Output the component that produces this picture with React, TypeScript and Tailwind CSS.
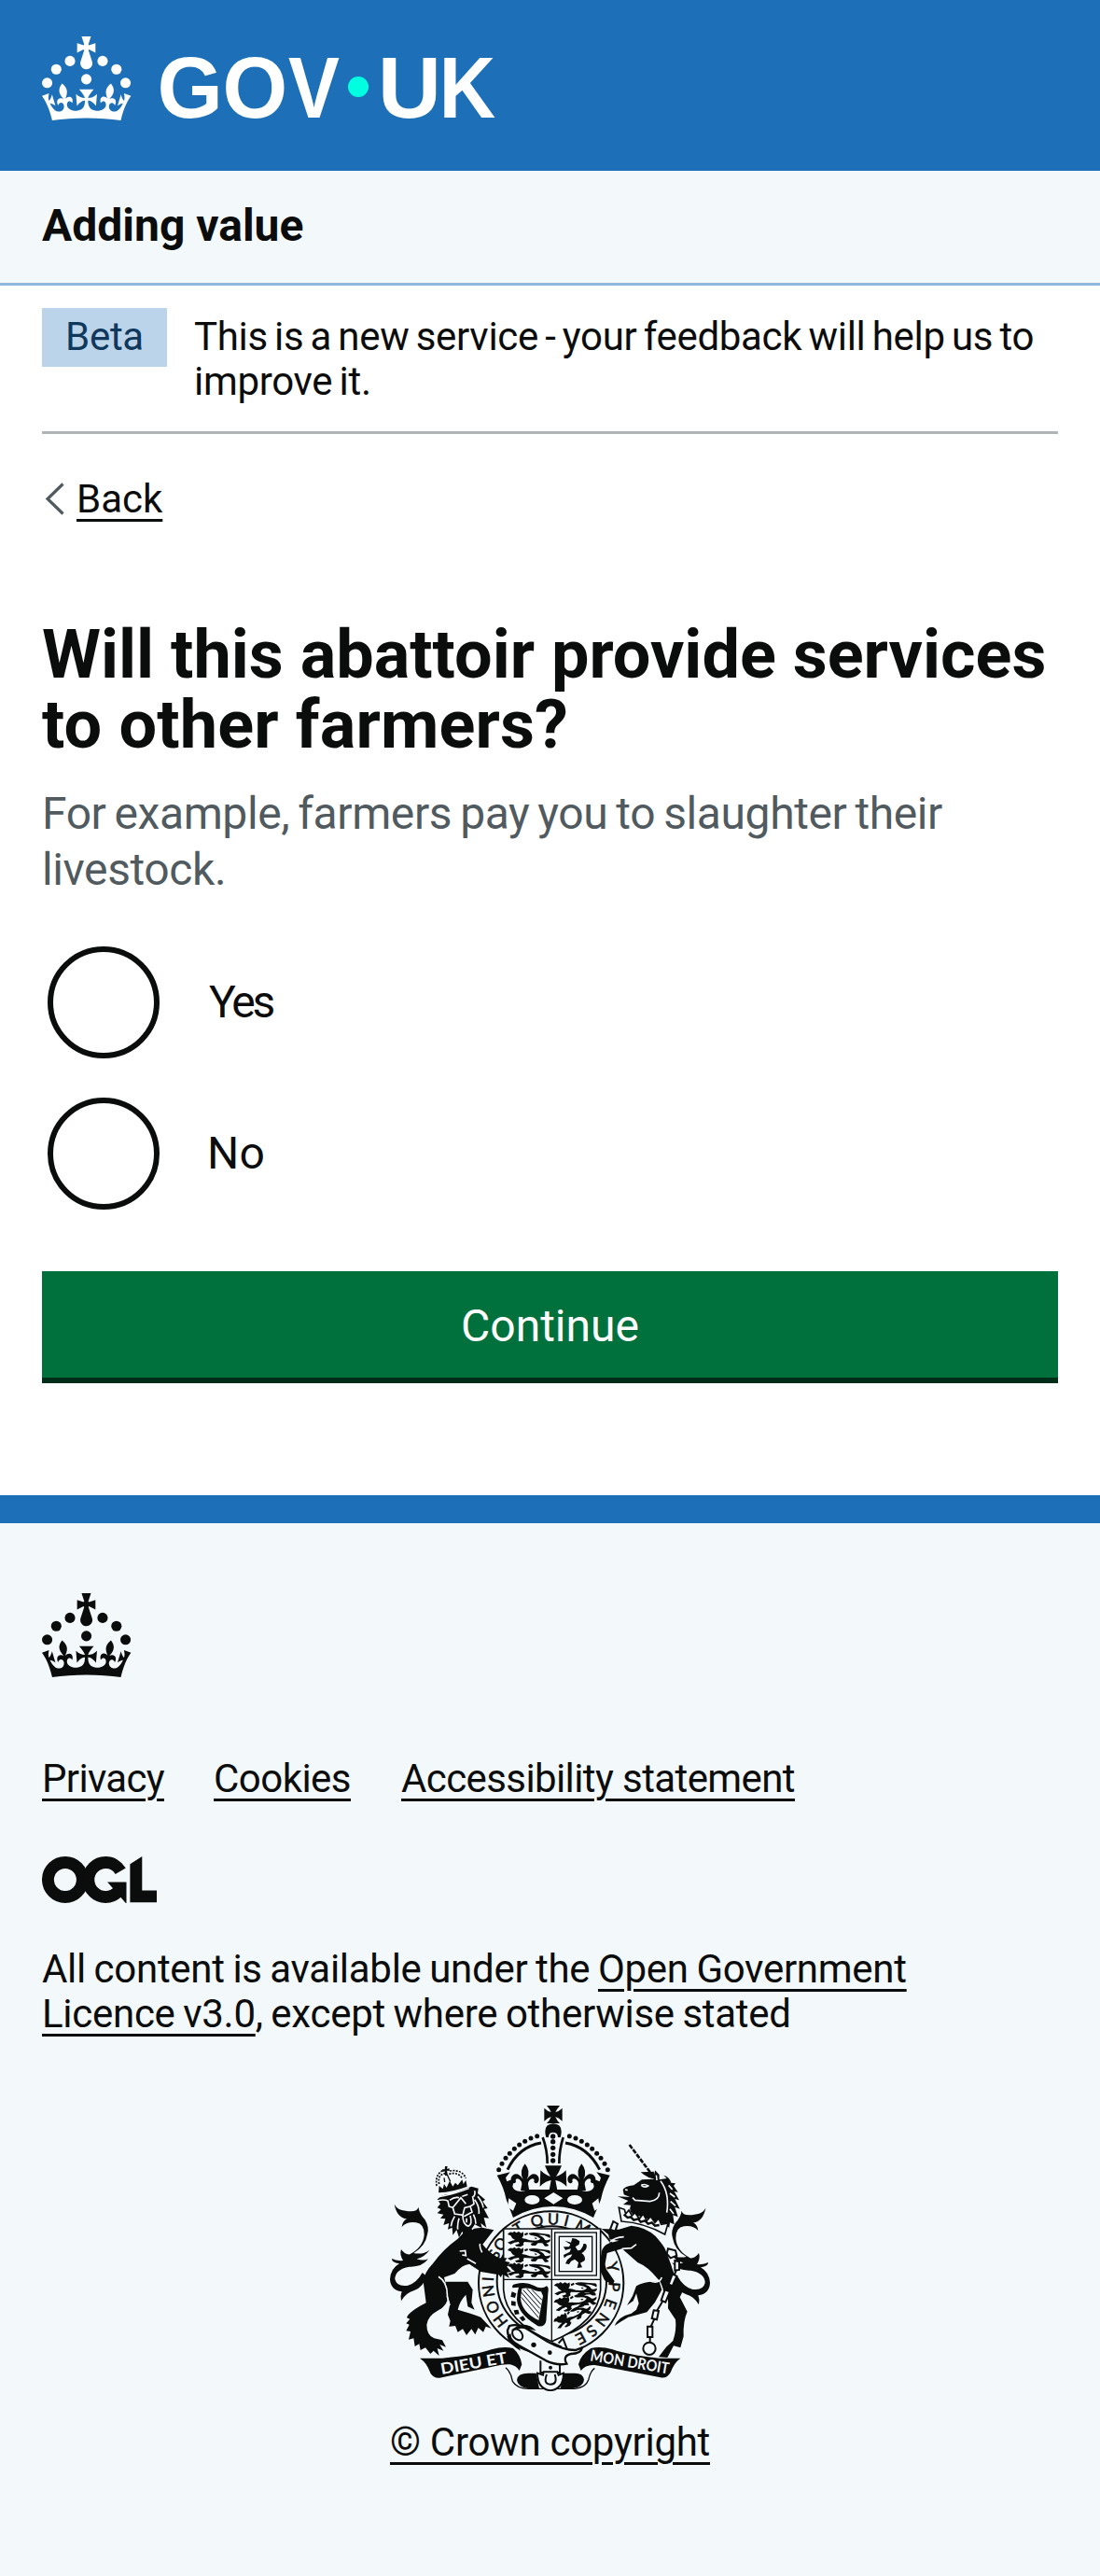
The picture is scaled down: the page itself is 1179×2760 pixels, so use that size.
import React from "react";

const INK = "#0b0c0c";
const PAPER = "#f3f8fa";

const CROWN =
  "M33.1,9.8c.2-.1.3-.3.5-.5l4.6,2.4v-6.8l-4.6,1.5c-.1-.2-.3-.3-.5-.5l1.9-5.9h-6.7l1.9,5.9c-.2.1-.3.3-.5.5l-4.6-1.5v6.8l4.6-2.4c.1.2.3.3.5.5l-2.6,8c-.9,2.8,1.2,5.7,4.1,5.7h0c3,0,5.1-2.9,4.1-5.7l-2.6-8ZM37,37.9s-3.4,3.8-4.1,6.1c2.2,0,4.2-.5,6.4-2.8l-.7,8.5c-2-2.8-4.4-4.1-5.7-3.8.1,3.1.5,6.7,5.8,7.2,3.7.3,6.7-1.5,7-3.8.4-2.6-2-4.3-3.7-1.6-1.4-4.5,2.4-6.1,4.9-3.2-1.9-4.5-1.8-7.7,2.4-10.9,3,4,2.6,7.3-1.2,11.1,2.4-1.3,6.2,0,4,4.6-1.2-2.8-3.7-2.2-4.2.2-.3,1.7.7,3.7,3,4.2,1.9.3,4.7-.9,7-5.9-1.3,0-2.4.7-3.9,1.7l2.4-8c.6,2.3,1.4,3.7,2.2,4.5.6-1.6.5-2.8,0-5.3l5,1.8c-2.6,3.6-5.2,8.7-7.3,17.5-7.4-1.1-15.7-1.7-24.5-1.7h0c-8.8,0-17.1.6-24.5,1.7-2.1-8.9-4.7-13.9-7.3-17.5l5-1.8c-.5,2.5-.6,3.7,0,5.3.8-.8,1.6-2.3,2.2-4.5l2.4,8c-1.5-1-2.6-1.7-3.9-1.7,2.3,5,5.2,6.2,7,5.9,2.3-.4,3.3-2.4,3-4.2-.5-2.4-3-3.1-4.2-.2-2.2-4.6,1.6-6,4-4.6-3.7-3.7-4.2-7.1-1.2-11.1,4.2,3.2,4.3,6.4,2.4,10.9,2.5-2.8,6.3-1.3,4.9,3.2-1.8-2.7-4.1-1-3.7,1.6.3,2.3,3.3,4.1,7,3.8,5.4-.5,5.7-4.2,5.8-7.2-1.3-.2-3.7,1-5.7,3.8l-.7-8.5c2.2,2.3,4.2,2.7,6.4,2.8-.7-2.3-4.1-6.1-4.1-6.1h10.6,0Z";

const CROWN_PEARLS: [number, number][] = [
  [20, 17.6],
  [10.2, 23.5],
  [3.7, 33.2],
  [31.7, 30.6],
  [43.3, 17.6],
  [53.2, 23.5],
  [59.7, 33.2],
];

function Crown() {
  return (
    <g fill="currentColor">
      {CROWN_PEARLS.map(([x, y]) => (
        <circle key={`${x}-${y}`} cx={x} cy={y} r="3.7" />
      ))}
      <path d={CROWN} />
    </g>
  );
}

const WORDMARK: [string, number, number][] = [
  ["G", 123.4, 70.3],
  ["O", 193.4, 69.7],
  ["V", 263.9, 54.9],
  ["U", 360, 67.9],
  ["K", 425.8, 60.4],
];

function Logotype() {
  return (
    <svg viewBox="0 0 486 90" className="block h-[90px] w-[486px] overflow-visible text-white" aria-label="GOV.UK">
      <g transform="scale(1.5)">
        <Crown />
      </g>
      <g fill="currentColor" fontFamily="Liberation Sans, Arial, sans-serif" fontWeight="700" fontSize="92.2">
        {WORDMARK.map(([c, x, w]) => (
          <text key={c} x={x} y="87" textLength={w} lengthAdjust="spacingAndGlyphs">
            {c}
          </text>
        ))}
      </g>
      <circle cx="339" cy="54" r="11" fill="#00ffe0" />
    </svg>
  );
}

function OglMark() {
  return (
    <svg viewBox="0 0 483.2 195.7" className="block h-[50px] w-[123px]" aria-label="Open Government Licence">
      <circle cx="97.8" cy="97.8" r="72.5" fill="none" stroke={INK} strokeWidth="50.7" />
      <circle cx="268.1" cy="97.8" r="72.5" fill="none" stroke={INK} strokeWidth="50.7" strokeDasharray="361 94.5" strokeDashoffset="-53.5" />
      <path d="M275.5 107.8h80v87.8h-3l-19.4-22.2-33.3-38.1z" fill={INK} />
      <path d="M370.8 32.4 421.5 0v142.8h61.7v50.7H370.8z" fill={INK} />
    </svg>
  );
}

const MOTTO: [string, number][] = [
  ["H", 143], ["O", 157], ["N", 172], ["I", 183],
  ["S", 206], ["O", 217],
  ["T", 239], ["Q", 257], ["U", 272], ["I", 284], ["M", 300],
  ["Y", 346], ["P", 4], ["E", 20], ["N", 36], ["S", 50], ["E", 62],
];

const BEADS: [number, number][] = [
  [527, 146], [507, 153], [488, 163], [470, 174], [454, 187], [439, 202], [426, 217], [414, 235], [404, 254],
];

function PassantLion({ x, y, r = 0 }: { x: number; y: number; r?: number }) {
  return (
    <g transform={`translate(${x} ${y}) rotate(${r})`}>
      <path d="M-8 -16 Q0 -26 8 -22 L14 -26 L20 -21 L28 -25 L36 -20 L42 -24 Q46 -12 38 -4 L50 -2 Q62 4 80 4 Q92 4 98 -2 Q90 -10 74 -12 Q62 -14 60 -20 Q74 -24 96 -20 L126 -16 Q132 -12 128 -4 L122 -8 Q108 -16 92 -14 Q106 -10 110 -2 Q112 4 122 2 L130 0 Q130 10 116 12 L124 18 Q124 24 112 22 L104 12 L90 12 L82 20 L70 20 L66 14 L76 10 L46 8 Q40 12 44 18 L34 24 L20 22 L16 18 L30 14 L28 8 L14 10 L2 16 L-8 10 L6 4 L16 2 Q4 -4 2 -12z" />
      <path d="M46 -18 l10 -4 l2 6 l-10 4z M78 -6 l10 2 l-6 4z" />
    </g>
  );
}

function TailFlames() {
  return (
    <path d="M68 365 Q78 384 104 386 Q142 392 145 374 Q150 398 166 414 Q182 440 174 462 Q168 500 130 522 Q160 528 181 512 Q166 534 140 541 Q160 548 177 541 Q156 568 116 566 Q70 574 70 606 Q76 632 112 626 Q140 618 158 585 L172 596 Q162 630 132 642 Q104 650 90 676 Q86 660 92 646 Q56 642 54 606 Q56 572 84 556 Q58 552 60 540 Q74 548 96 546 Q84 526 90 510 Q102 528 118 526 Q162 502 164 462 Q164 428 138 424 Q108 420 92 438 Q94 420 108 412 Q76 408 68 365z" />
  );
}

function FleurDeLis({ x, y }: { x: number; y: number }) {
  return (
    <path
      transform={`translate(${x} ${y})`}
      d="M0 0 Q20 24 6 50 Q22 26 38 36 Q50 46 42 60 Q34 66 29 58 Q32 48 24 48 Q10 52 10 66 L14 86 L-14 86 L-10 66 Q-10 52 -24 48 Q-32 48 -29 58 Q-34 66 -42 60 Q-50 46 -38 36 Q-22 26 -6 50 Q-20 24 0 0z"
    />
  );
}

function RoyalArms() {
  return (
    <svg viewBox="54 48 1029 918" className="block h-[306px] w-[343px]" fill={INK} aria-hidden="true">
      {/* Tails of both supporters */}
      <TailFlames />
      <g transform="translate(1137 12) scale(-1 1)">
        <TailFlames />
      </g>

      {/* Garter */}
      <ellipse cx="572" cy="618" rx="233" ry="230" fill={PAPER} stroke={INK} strokeWidth="6" />
      <ellipse cx="574" cy="612" rx="176" ry="176" fill={PAPER} stroke={INK} strokeWidth="6" />
      <g fontFamily="Lato, sans-serif" fontSize="50" textAnchor="middle" stroke={INK} strokeWidth="1.6">
        {MOTTO.map(([c, a]) => (
          <text key={a} transform={`translate(572 616) rotate(${a + 90}) translate(0 -186)`}>
            {c}
          </text>
        ))}
      </g>

      {/* Shield */}
      <path d="M419 444H731V640Q724 745 574 806Q426 745 419 640z" fill={PAPER} stroke={INK} strokeWidth="5" />
      <path d="M574 444V806M419 607H731" stroke={INK} strokeWidth="4" fill="none" />
      <PassantLion x={440} y={478} />
      <PassantLion x={440} y={529} />
      <PassantLion x={440} y={579} />
      <g fill="none" stroke={INK}>
        <rect x="584" y="456" width="134" height="138" strokeWidth="4" />
        <rect x="598" y="469" width="106" height="112" strokeWidth="4" />
      </g>
      <path d="M616 482L636 488L640 474L652 476L664 484L662 494L650 502L658 514L666 512Q676 500 676 492L682 492Q690 496 684 510Q676 520 670 522Q684 532 680 546L666 554L672 568L656 570L660 552L648 542L636 548L630 558L618 556L624 544L636 534L640 526L624 530L614 538L612 528L632 518L636 508L618 512L612 502L630 502L634 494z" />
      <path d="M456 622Q445 624 448 634L468 632Q462 650 462 672Q466 716 520 750L530 757Q553 760 556 740L562 652Q566 632 558 628Q540 640 516 626Q490 612 456 622zM478 636Q500 632 520 642Q532 646 540 646L546 660L532 738Q478 712 474 668z" fillRule="evenodd" />
      <path d="M482 640L536 700M476 648L534 716M476 664L532 730M494 636L540 688M510 640L544 674" stroke={INK} strokeWidth="3" />
      <path d="M446 646l14 6-4 14-14-4zM444 676l14 2v14l-14-2zM452 706l14-2 4 14-14 2zM470 730l12-6 8 12-10 6z" />
      <PassantLion x={590} y={642} r={-3} />
      <PassantLion x={592} y={694} r={-14} />
      <g transform="translate(594 752) scale(.92)">
        <PassantLion x={0} y={0} r={-30} />
      </g>

      {/* Imperial crown */}
      <path d="M558 48H600Q590 60 586 69Q598 66 608 56V98Q598 88 586 84Q590 95 600 105H558Q568 95 572 84Q560 88 550 98V56Q560 66 572 69Q568 60 558 48z" />
      <path d="M556 150Q544 108 579 106Q614 108 602 150L594 150Q594 134 578 134Q564 134 564 150z" />
      <circle cx="578" cy="147" r="8" />
      {[164, 184, 205, 225].map((y) => (
        <circle key={y} cx="578" cy={y} r="8" />
      ))}
      <path d="M545 150Q560 190 560 234M611 150Q598 190 598 234" stroke={INK} strokeWidth="8" fill="none" />
      <g fill="none" stroke={INK} strokeWidth="9">
        <path d="M540 168Q468 180 432 254" />
        <path d="M618 168Q690 180 728 254" />
      </g>
      {BEADS.map(([x, y]) => (
        <g key={x}>
          <circle cx={x} cy={y} r="7.5" />
          <circle cx={1158 - x} cy={y} r="7.5" />
        </g>
      ))}
      <path d="M398 272L440 262L426 280L430 292L454 282L448 308Q452 322 474 324Q488 322 500 318H660Q672 322 686 324Q706 322 710 308L704 282L728 292L732 280L718 262L761 272Q740 310 732 350L708 408Q646 372 579 372Q512 372 450 408L428 350Q420 310 398 272z" />
      <FleurDeLis x={488} y={235} />
      <FleurDeLis x={670} y={235} />
      <path d="M552 241H606Q598 262 588 276Q604 272 620 256L622 308Q604 290 586 288L592 320H566L572 288Q554 290 536 308L538 256Q554 272 570 276Q560 262 552 241z" />
      <g fill={PAPER}>
        <ellipse cx="511" cy="351" rx="24" ry="15" />
        <ellipse cx="648" cy="351" rx="24" ry="15" />
        <path d="M580 327L610 346L580 365L550 346zM436 346L460 362L450 386L432 374zM724 346L704 362L712 386L728 374z" />
      </g>

      {/* Lion */}
      <path d="M272 476Q222 512 192 556Q160 588 162 620L170 682Q112 712 108 730L118 734L106 748L116 752L106 772L120 774L114 800L130 796L134 822L148 814L152 834L168 826L184 846L194 836L212 852L206 828L226 836L214 816L234 824L222 802L196 796Q172 786 172 752Q176 724 206 708Q244 690 240 650L228 600L262 588Q290 556 310 558L346 582L404 592L410 600L416 590L438 602L430 584L444 582L430 566L440 552L424 548L430 538L404 538Q372 520 352 494L388 448L350 440L300 446z" />
      <path d="M232 614H304L320 640L316 682L326 704L304 694L298 656Q278 676 272 704L312 716L346 728L380 764L362 758L354 776L338 762L328 784L316 766L300 786L288 766L272 776L264 756L244 758L248 740L240 720L246 690z" />
      <path d="M278 516L296 514L298 530L286 528M210 598Q240 616 238 662L246 690M302 540L330 556M344 492Q340 500 350 520" stroke={PAPER} strokeWidth="5" fill="none" />
      <path d="M206 350Q220 332 250 334L316 308L338 314L336 330L360 350L352 356L368 378L356 380L372 410L356 408L364 440L346 426L350 442L326 430L316 450L308 446L296 476L286 452L276 472L268 448L256 464L254 440L240 446L244 426L226 432L232 412L216 410L226 398L206 394L218 382L206 376L216 364z" />
      <g stroke={PAPER} fill="none" strokeWidth="5">
        <path d="M206 354Q226 348 240 354L244 372L256 376M326 322Q330 336 320 342L324 364L312 372M256 376L282 344L298 364M256 376L262 396L288 400L294 376L312 372L318 390L292 404M246 352Q262 340 276 344M286 340L304 334M326 350Q342 370 340 396M336 340Q352 360 354 376" />
        <path d="M288 402Q288 430 306 436Q320 430 312 402M300 410V424" />
        <path d="M262 404Q252 420 250 436M276 410Q270 430 272 446M322 398Q330 412 330 428M318 446L330 432" />
      </g>
      {/* Lion's crown */}
      <g>
        <path d="M231 243h8l-2 8 8-1v8l-8-1 3 16h-9l-1-14-7 2-1-8 8 0z" />
        <path d="M210 328Q256 326 302 308L298 288L290 300L286 286L272 304L264 296L256 308L246 290L236 312L228 300L224 316L212 306z" />
        <path d="M212 300Q206 270 232 266M204 306Q198 268 226 256M244 268Q274 260 286 282M246 258Q286 252 298 282" fill="none" stroke={INK} strokeWidth="5" strokeDasharray="6 4" />
        <path d="M238 270L248 292M228 280L230 294" stroke={INK} strokeWidth="4" />
        <path d="M206 342Q258 334 308 314" fill="none" stroke={PAPER} strokeWidth="4" />
      </g>

      {/* Unicorn */}
      <path d="M790 446L830 434Q876 438 908 468Q936 500 940 512L958 560Q968 600 990 616Q1002 640 986 664L1010 710Q996 740 998 790L988 826L966 820L946 858L918 856L942 824L964 804Q976 770 972 736L948 700Q952 660 934 650Q930 618 914 604Q884 566 850 552L800 508L752 522L744 566L776 612L770 624L744 610L730 578L734 520Q736 500 760 490L790 482L760 478L756 462L734 444z" />
      <path d="M846 628Q872 612 920 614L928 640L906 680L880 712L820 728L794 744L776 756Q788 726 830 716L846 704L854 684L846 652L836 676L816 690L834 660z" />
      <path d="M890 612Q920 622 928 600M846 494L830 506L800 508M806 470Q776 472 762 486" fill="none" stroke={PAPER} strokeWidth="5" />
      <path d="M803 318Q808 308 838 304L864 286L902 284L906 256L920 270L920 286L944 282L934 272Q952 276 958 296L972 298L966 306L980 326L968 324L984 352L970 348L986 380L970 374L980 406L964 400L968 430L954 424L952 440L936 430L858 404L838 400Q820 388 828 368L804 366L820 354L786 340L826 342L806 334z" />
      <g fill="none" stroke={PAPER} strokeWidth="5">
        <path d="M924 290Q954 330 944 392M920 328Q920 352 890 356L842 352L834 344M910 272L912 288M950 304L962 318M954 330L970 342M956 356L972 370M954 380L966 396" />
        <path d="M862 304Q872 298 884 306Q872 314 862 304M810 318l8 2" />
      </g>
      <path d="M790 376L808 382L812 396L822 384L832 402L842 392L856 412L868 396L880 418L892 404L906 424L918 410L926 430L948 426L938 462Q870 424 798 420z" fill={PAPER} stroke={INK} strokeWidth="5" />
      <path d="M806 398l12 10 10-2 10 10 14-4 8 10 14-4 10 10 12-4 10 10 14-2" fill="none" stroke={INK} strokeWidth="7" />
      <path d="M824 174L892 264" stroke={INK} strokeWidth="8" strokeDasharray="15 4" fill="none" />
      <path d="M860 262L902 260L910 284Q884 284 860 262z" />
      {/* Chain */}
      <g fill={PAPER} stroke={INK} strokeWidth="6">
        <path d="M948 508L972 514L976 530L956 538L944 524z" />
        <path d="M970 546L984 550L984 576L970 578z" />
        <path d="M962 590L976 596L962 628L950 622z" />
        <path d="M938 640L954 646L940 680L926 674z" />
        <path d="M902 706L918 708L912 736L896 732z" />
        <path d="M882 758L898 758L898 792L882 792z" />
        <circle cx="888" cy="829" r="20" />
        <path d="M772 420L786 428L778 452L762 446z" />
      </g>
      <path d="M974 532L978 548M974 578L968 594M956 626L948 642M930 678L912 708M904 734L892 760M890 792V808" stroke={INK} strokeWidth="6" />

      {/* Garter buckle and strap */}
      <path d="M538 868V906H600V868" fill={PAPER} stroke={INK} strokeWidth="6" />
      <path d="M438 756Q464 748 492 764L560 806Q612 834 650 834L672 826Q668 846 636 846Q608 852 622 878Q590 884 556 868L474 822Q430 800 432 770z" fill={PAPER} stroke={INK} strokeWidth="7" />
      <path d="M442 770L470 752Q504 748 524 772L500 766L476 764zM430 790Q436 816 474 836L468 822Q444 806 442 780z" />
      <ellipse cx="464" cy="784" rx="14" ry="20" transform="rotate(-40 464 784)" fill={PAPER} stroke={INK} strokeWidth="6" />
      <path d="M574 810L606 824M596 812L610 796L624 832" stroke={INK} strokeWidth="6" fill="none" />
      <circle cx="516" cy="817" r="8" />
      <circle cx="568" cy="842" r="7" />
      <circle cx="570" cy="890" r="6" />
      {/* Scroll */}
      <path d="M150 860L222 860Q330 850 380 832Q420 820 450 828Q474 850 478 880L470 900Q460 884 440 880Q420 878 390 886L214 923Q196 926 184 908Q174 876 150 860z" />
      <path d="M988 860L920 860Q820 850 770 832Q730 820 700 828Q666 850 660 880L668 900Q682 880 712 882L760 890L924 922Q944 926 956 906Q966 876 988 860z" />
      <path d="M426 890Q444 906 448 934Q462 958 500 958H648Q684 954 692 930Q698 902 712 892" fill="none" stroke={INK} strokeWidth="4" />
      <path d="M462 930Q464 908 500 908H524L534 958H500Q464 952 462 930zM678 930Q676 908 648 908H612L602 958H640Q676 952 678 930z" />
      <path d="M528 908L546 914L548 904H592L596 914L612 908Q612 958 570 964Q528 958 528 908z" fill={PAPER} stroke={INK} strokeWidth="6" />
      <path d="M558 912Q546 944 570 944Q594 944 584 912" fill="none" stroke={INK} strokeWidth="6" />
      <g fill={PAPER} fontFamily="Lato, sans-serif" fontWeight="700" fontSize="50">
        <text transform="translate(220 912) rotate(-10)" textLength="216" lengthAdjust="spacingAndGlyphs">
          DIEU ET
        </text>
        <text transform="translate(696 868) rotate(9.5)" textLength="256" lengthAdjust="spacingAndGlyphs">
          MON DROIT
        </text>
      </g>
    </svg>
  );
}

const LINK = "underline decoration-[3px] underline-offset-[7px]";

function Radio({ label, className }: { label: string; className: string }) {
  return (
    <label className="flex h-[120px] items-center">
      <span className="ml-[6px] size-[120px] rounded-full border-[6px] border-[#0b0c0c]" />
      <span className={`text-[48px] leading-[60px] ${className}`}>{label}</span>
    </label>
  );
}

export default function App() {
  return (
    <div className="min-h-[2760px] w-[1179px] bg-white font-['Roboto',sans-serif] text-[#0b0c0c]">
      <header className="h-[183px] bg-[#1d70b8] px-[45px] pt-[39px]">
        <Logotype />
      </header>
      <div className="h-[123px] border-b-[3px] border-[#8eb8dc] bg-[#f3f8fa] px-[45px] pt-[29px]">
        <p className="text-[48px] leading-[60px] font-bold">Adding value</p>
      </div>

      <main className="h-[1296px] px-[45px]">
        <div className="flex h-[159px] items-start border-b-[3px] border-[#b1b4b6] pt-6 text-[42px] leading-[48px]">
          <strong className="flex h-[63px] w-[134px] items-start justify-center bg-[#bbd4ea] pt-[7px] font-normal tracking-[-0.3px] text-[#0f385c]">
            Beta
          </strong>
          <p className="ml-[29px] pt-[7px] tracking-[-0.3px] whitespace-nowrap [word-spacing:-2.9px]">
            This is a new service - your feedback will help us to
            <br />
            improve it.
          </p>
        </div>
        <a className="mt-[46px] flex h-12 items-start text-[42px] leading-[48px]">
          <svg viewBox="0 0 37 48" className="h-12 w-[37px]" fill="none" stroke="#505a5f" strokeWidth="3.2">
            <path d="M22.5 7.5 6 23.5 22.5 39.5" />
          </svg>
          <span className={LINK}>Back</span>
        </a>
        <h1 className="mt-[105px] text-[72px] leading-[75px] font-bold whitespace-nowrap">
          Will this abattoir provide services
          <br />
          <span className="tracking-[0.15px]">to other farmers?</span>
        </h1>
        <p className="mt-[28px] text-[48px] leading-[60px] tracking-[-0.4px] whitespace-nowrap text-[#505a5f] [word-spacing:-2.5px]">
          For example, farmers pay you to slaughter their
          <br />
          livestock.
        </p>
        <div className="mt-[52px] flex flex-col gap-[42px]">
          <Radio label="Yes" className="ml-[53px] tracking-[-3.1px]" />
          <Radio label="No" className="ml-[51px] tracking-[0.2px]" />
        </div>
        <button className="mt-[66px] block h-[114px] w-full bg-[#00703c] pt-[3px] text-center text-[48px] leading-[57px] text-white shadow-[0_6px_0_#002d18]">
          Continue
        </button>
      </main>

      <footer className="h-[1158px] border-t-[30px] border-[#1d70b8] bg-[#f3f8fa] px-[45px] pt-[75px] text-[42px] leading-[48px]">
        <svg viewBox="0 0 64 60" className="block h-[90px] w-[96px]">
          <Crown />
        </svg>
        <ul className="mt-[85px] flex h-12">
          <li className="w-[184px] tracking-[-0.67px]">
            <a className={LINK}>Privacy</a>
          </li>
          <li className="w-[201px] tracking-[-0.53px]">
            <a className={LINK}>Cookies</a>
          </li>
          <li className="tracking-[-0.6px]">
            <a className={LINK}>Accessibility statement</a>
          </li>
        </ul>
        <div className="mt-[59px]">
          <OglMark />
        </div>
        <p className="mt-[47px] tracking-[-0.28px] whitespace-nowrap [word-spacing:-1.5px]">
          All content is available under the <a className={LINK}>Open Government</a>
          <br />
          <a className={LINK}>Licence v3.0</a>, except where otherwise stated
        </p>
        <div className="mt-[74px] flex flex-col items-center">
          <RoyalArms />
          <a className={`mt-[31px] tracking-[-0.28px] ${LINK}`}>© Crown copyright</a>
        </div>
      </footer>
    </div>
  );
}
